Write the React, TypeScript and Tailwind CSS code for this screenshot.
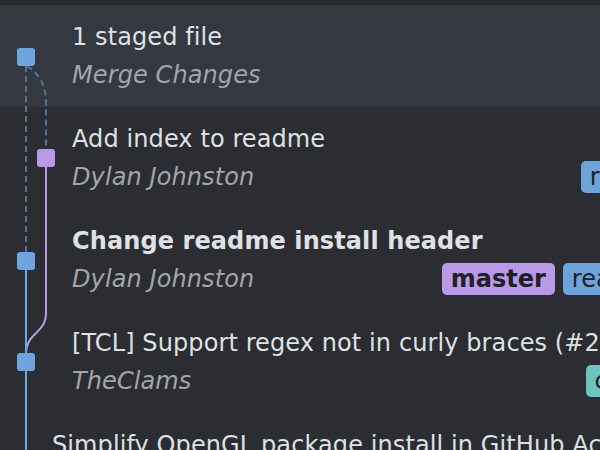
import React from 'react';

type Badge = { name: string; color: string; bold?: boolean };

interface Commit {
  title: string;
  author: string;
  bold?: boolean;
  selected?: boolean;
  indent: string;
  badges?: Badge[];
  badgeShift?: string;
}

const commits: Commit[] = [
  { title: '1 staged file', author: 'Merge Changes', selected: true, indent: 'pl-[72px]' },
  {
    title: 'Add index to readme',
    author: 'Dylan Johnston',
    indent: 'pl-[72px]',
    badges: [{ name: 'readme', color: 'bg-[#6fa3dc]' }],
    badgeShift: '-mr-[91px]',
  },
  {
    title: 'Change readme install header',
    author: 'Dylan Johnston',
    bold: true,
    indent: 'pl-[72px]',
    badges: [
      { name: 'master', color: 'bg-[#b89ae6]', bold: true },
      { name: 'readme', color: 'bg-[#6fa3dc]' },
    ],
    badgeShift: '-mr-[73px]',
  },
  {
    title: '[TCL] Support regex not in curly braces (#253)',
    author: 'TheClams',
    indent: 'pl-[72px]',
    badges: [{ name: 'clams', color: 'bg-[#6ec4be]' }],
    badgeShift: '-mr-[74px]',
  },
  {
    title: 'Simplify OpenGL package install in GitHub Actions',
    author: 'Dylan Johnston',
    indent: 'pl-[52px]',
  },
];

function Graph() {
  const dash = '#55728f';
  return (
    <svg className="absolute left-0 top-0" width="72" height="450" viewBox="0 0 72 450">
      <path d="M26 66 L26 252" stroke={dash} strokeWidth="2" strokeDasharray="6 4" fill="none" />
      <path d="M27 66 Q46 78 46 102 L46 149" stroke={dash} strokeWidth="2" strokeDasharray="6 4" fill="none" />
      <path d="M46 167 L46 313 C46 334 26 332 26 354" stroke="#b89ae8" strokeWidth="2" fill="none" />
      <path d="M26 270 L26 450" stroke="#6fa5dd" strokeWidth="2" fill="none" />
      <rect x="17" y="48" width="18" height="18" rx="3" fill="#6fa5dd" />
      <rect x="37" y="149" width="18" height="18" rx="3" fill="#b89ae8" />
      <rect x="17" y="252" width="18" height="18" rx="3" fill="#6fa5dd" />
      <rect x="17" y="353" width="18" height="18" rx="3" fill="#6fa5dd" />
    </svg>
  );
}

export default function App() {
  return (
    <div
      className="relative w-[600px] h-[450px] overflow-hidden bg-[#2b2d32] text-[24px]"
      style={{ fontFamily: '"DejaVu Sans", "Liberation Sans", sans-serif' }}
    >
      <div className="h-[5px] bg-[#2a2c30]" />
      {commits.map((c, i) => (
        <div
          key={i}
          className={`h-[102px] flex flex-col justify-center overflow-hidden ${c.indent} ${c.selected ? 'bg-[#343841]' : ''}`}
        >
          <div className={`leading-[37px] whitespace-nowrap tracking-[0.1px] text-[#dfe1e5] ${c.bold ? 'font-bold' : ''}`}>
            {c.title}
          </div>
          <div className="flex items-center h-[37px]">
            <span className="italic text-[#a2a5aa] whitespace-nowrap tracking-[0.1px]">{c.author}</span>
            {c.badges && (
              <div className={`ml-auto shrink-0 flex gap-2 ${c.badgeShift}`}>
                {c.badges.map((b) => (
                  <span
                    key={b.name}
                    className={`h-[32px] leading-[32px] px-[9px] rounded-[5px] text-[#1f2126] whitespace-nowrap ${b.color} ${b.bold ? 'font-bold' : ''}`}
                  >
                    {b.name}
                  </span>
                ))}
              </div>
            )}
          </div>
        </div>
      ))}
      <Graph />
    </div>
  );
}
